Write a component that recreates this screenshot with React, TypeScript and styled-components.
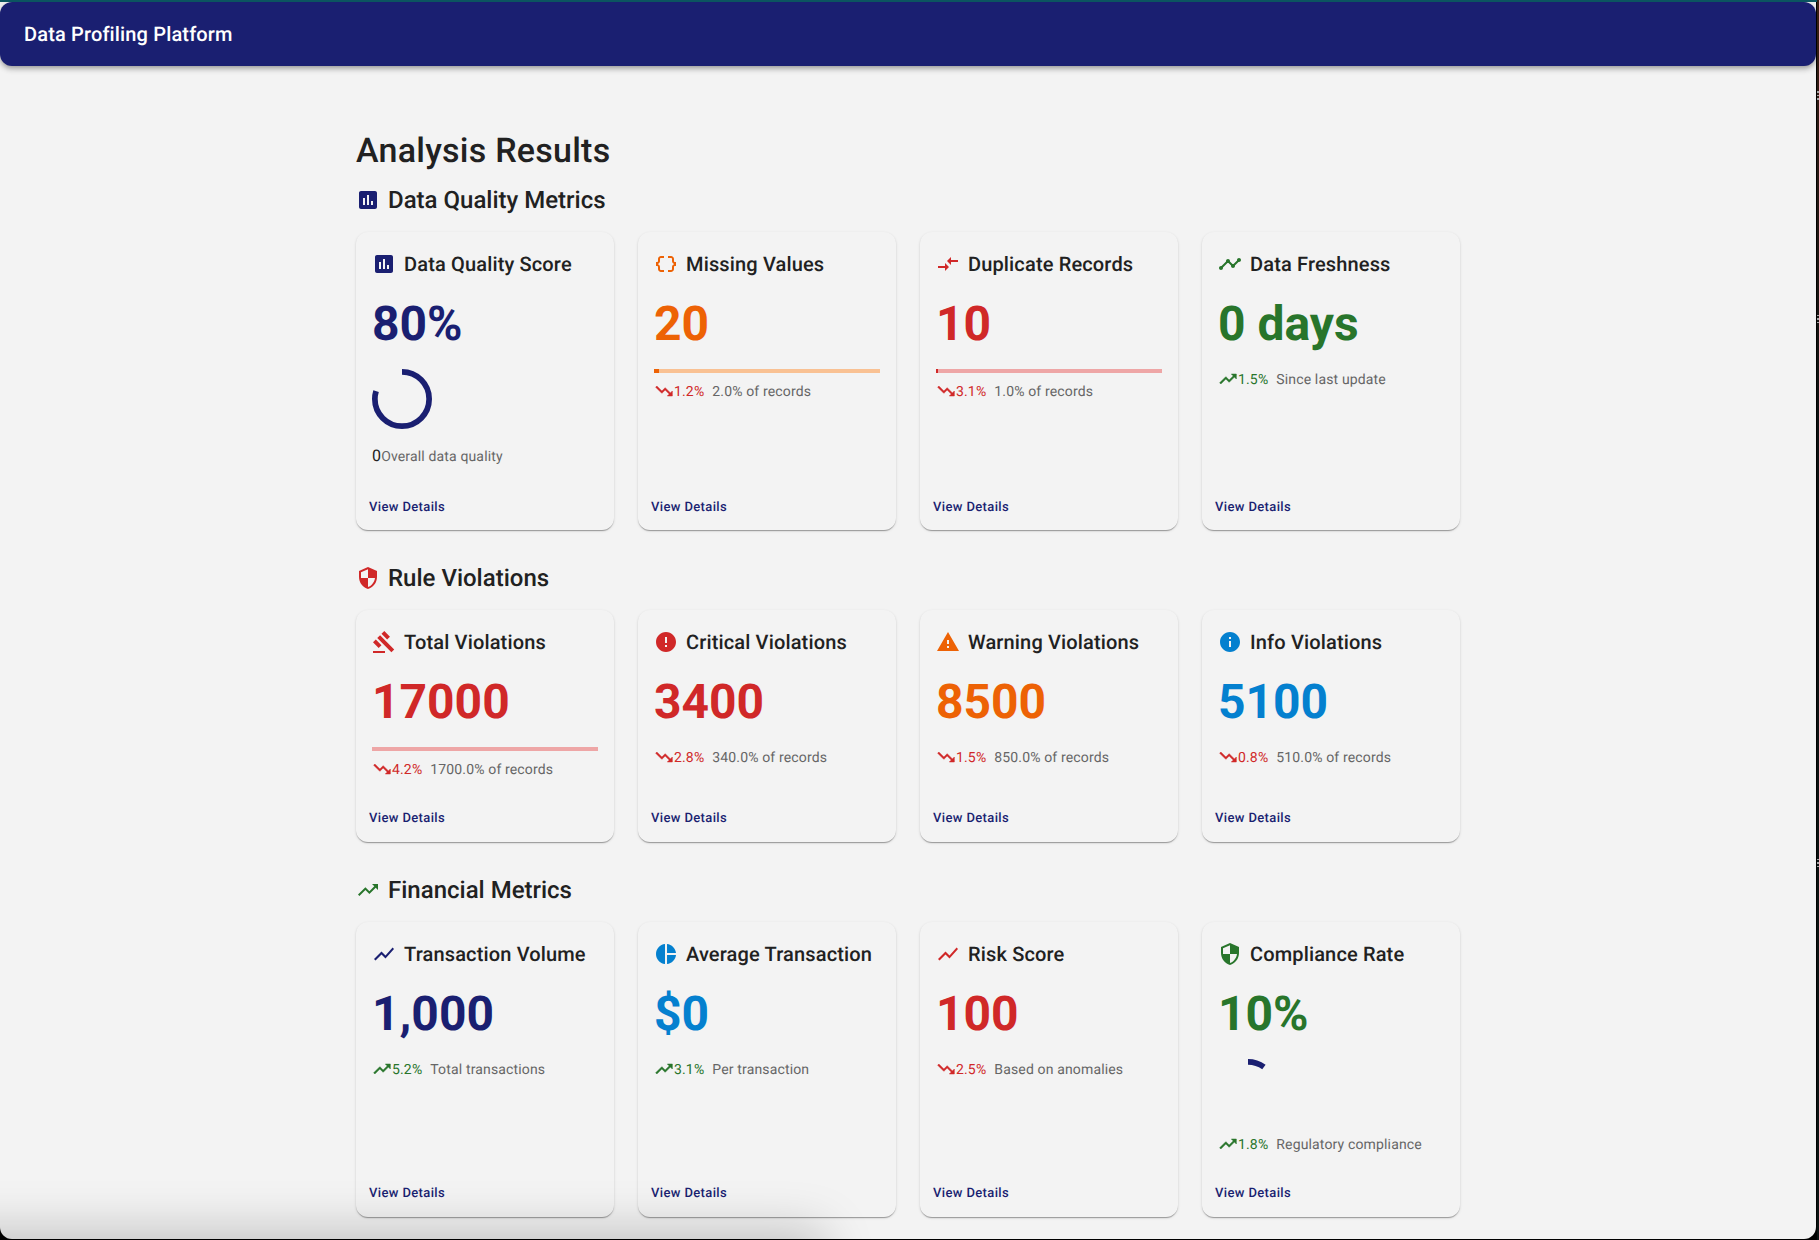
import React from "react";
import styled, { createGlobalStyle } from "styled-components";
import {
  MdAssessment, MdDataObject, MdCompareArrows, MdTimeline, MdSecurity, MdGavel, MdError,
  MdWarning, MdInfo, MdTrendingUp, MdTrendingDown, MdShowChart, MdPieChart,
} from "react-icons/md";
import type { IconType } from "react-icons";

const palette = {
  navy: "#1a1f71",
  orange: "#ed6205",
  red: "#d02828",
  green: "#28752b",
  blue: "#0480cf",
  text: "#212121",
  muted: "#666666",
  page: "#f3f3f3",
};

const GlobalStyle = createGlobalStyle`
  * { box-sizing: border-box; }
  body {
    margin: 0;
    background: #000;
    overflow: hidden;
    font-family: Roboto, "Liberation Sans", sans-serif;
    color: ${palette.text};
    text-rendering: geometricPrecision;
    -webkit-font-smoothing: antialiased;
  }
`;

const ticks = "repeating-linear-gradient(#a5a5a5 0 1.5px, transparent 1.5px 3.5px)";

const Desktop = styled.div`
  height: 1240px;
  padding: 2px 3px 1px 0;
  background:
    linear-gradient(#0b5560, #0b5560) 0 0 / 1817px 2px no-repeat,
    ${ticks} 100% 91px / 2px 9px no-repeat,
    ${ticks} 100% 315px / 2px 9px no-repeat,
    ${ticks} 100% 859px / 2px 9px no-repeat,
    linear-gradient(#3b2013 0, #2d1a12 120px, #0c1010 420px, #0b1312 100%) 100% 0 / 2px 100% no-repeat,
    #000;
`;

const Window = styled.div`
  position: relative;
  height: 1237px;
  overflow: hidden;
  border-radius: 0 0 12px 12px;
  background: ${palette.page};
`;

const AppBar = styled.header`
  height: 64px;
  display: flex;
  align-items: center;
  padding: 0 24px;
  border-radius: 12px;
  background: ${palette.navy};
  color: #fff;
  box-shadow: 0 2px 4px -1px rgba(0, 0, 0, 0.2), 0 4px 5px rgba(0, 0, 0, 0.14), 0 1px 10px rgba(0, 0, 0, 0.12);
`;

const Brand = styled.div`
  font-size: 20px;
  font-weight: 500;
  line-height: 32px;
  letter-spacing: 0.0075em;
`;

const Main = styled.main`
  width: 1152px;
  margin: 0 auto;
  padding: 64px 24px 0;
`;

const PageTitle = styled.h1`
  margin: 0 0 12px;
  font-size: 34px;
  font-weight: 500;
  line-height: 42px;
  letter-spacing: 0.00735em;
`;

const Section = styled.section`
  margin-bottom: 32px;
`;

const SectionTitle = styled.h2`
  display: flex;
  align-items: center;
  gap: 8px;
  margin: 0 0 16px;
  font-size: 24px;
  font-weight: 500;
  line-height: 32px;
`;

const CardActions = styled.div`
  padding: 8px;
`;

const CardGrid = styled.div<{ $lowActions?: boolean }>`
  display: grid;
  grid-template-columns: repeat(4, 1fr);
  gap: 24px;

  ${CardActions} {
    padding: ${(p) => (p.$lowActions ? "9px 8px 7px" : "8px")};
  }
`;

const Card = styled.article`
  display: flex;
  flex-direction: column;
  border-radius: 12px;
  background: ${palette.page};
  box-shadow: 0 2px 1px -1px rgba(0, 0, 0, 0.2), 0 1px 1px rgba(0, 0, 0, 0.14), 0 1px 3px rgba(0, 0, 0, 0.12);
`;

const CardContent = styled.div`
  flex: 1;
  padding: 16px;
`;

const CardTitle = styled.h3`
  display: flex;
  align-items: center;
  gap: 8px;
  margin: 0 0 16px;
  font-size: 20px;
  font-weight: 500;
  line-height: 32px;
  letter-spacing: 0.0075em;
  white-space: nowrap;
`;

const Value = styled.div<{ $color: string }>`
  margin-bottom: 17px;
  color: ${(p) => p.$color};
  font-size: 48px;
  font-weight: 700;
  line-height: 56px;
`;

const Track = styled.div<{ $color: string }>`
  height: 4px;
  margin-bottom: 8px;
  background: ${(p) => p.$color};
`;

const Fill = styled.div<{ $color: string }>`
  height: 4px;
  background: ${(p) => p.$color};
`;

const Gauge = styled.svg`
  display: block;
  width: 60px;
  height: 60px;
  margin-bottom: 15px;
`;

const TrendRow = styled.div<{ $tight: boolean }>`
  display: flex;
  align-items: center;
  padding-top: 1px;
  margin-bottom: ${(p) => (p.$tight ? "-1px" : "0")};
  font-size: 14px;
  line-height: 20px;
  letter-spacing: 0.01071em;
`;

const Zero = styled.span`
  margin-bottom: 2px;
  font-size: 16px;
  line-height: 22px;
  letter-spacing: 0.00938em;
`;

const Change = styled.span<{ $color: string }>`
  display: flex;
  align-items: center;
  height: 20px;
  margin-right: 8px;
  color: ${(p) => p.$color};

  svg {
    flex: none;
    margin-bottom: 2px;
    stroke-width: 0.6;
  }

  path[fill="none"] {
    stroke: none;
  }
`;

const Note = styled.span`
  color: ${palette.muted};
`;

const DetailsButton = styled.button`
  display: block;
  padding: 4px 5px;
  border: 0;
  background: none;
  color: ${palette.navy};
  font: 500 13px/22px Roboto, "Liberation Sans", sans-serif;
  letter-spacing: 0.02857em;
  text-rendering: inherit;
`;

const DockShade = styled.div`
  position: absolute;
  left: -60px;
  bottom: -56px;
  width: 870px;
  height: 50px;
  box-shadow: 0 0 50px 14px rgba(0, 0, 0, 0.21);
  pointer-events: none;
`;

type Metric = {
  title: string;
  icon: IconType;
  color: string;
  value: string;
  bar?: { percent: number; track: string };
  gauge?: number;
  trend?: { up: boolean; text: string };
  note: string;
};

type Group = { title: string; icon: IconType; color: string; lowActions?: boolean; metrics: Metric[] };

const { navy, orange, red, green, blue } = palette;
const pinkTrack = "#eea6a6";

const groups: Group[] = [
  {
    title: "Data Quality Metrics", icon: MdAssessment, color: navy, lowActions: true,
    metrics: [
      { title: "Data Quality Score", icon: MdAssessment, color: navy, value: "80%", gauge: 80, note: "Overall data quality" },
      { title: "Missing Values", icon: MdDataObject, color: orange, value: "20", bar: { percent: 2, track: "#f9c193" }, trend: { up: false, text: "1.2%" }, note: "2.0% of records" },
      { title: "Duplicate Records", icon: MdCompareArrows, color: red, value: "10", bar: { percent: 1, track: pinkTrack }, trend: { up: false, text: "3.1%" }, note: "1.0% of records" },
      { title: "Data Freshness", icon: MdTimeline, color: green, value: "0 days", trend: { up: true, text: "1.5%" }, note: "Since last update" },
    ],
  },
  {
    title: "Rule Violations", icon: MdSecurity, color: red,
    metrics: [
      { title: "Total Violations", icon: MdGavel, color: red, value: "17000", bar: { percent: 0, track: pinkTrack }, trend: { up: false, text: "4.2%" }, note: "1700.0% of records" },
      { title: "Critical Violations", icon: MdError, color: red, value: "3400", trend: { up: false, text: "2.8%" }, note: "340.0% of records" },
      { title: "Warning Violations", icon: MdWarning, color: orange, value: "8500", trend: { up: false, text: "1.5%" }, note: "850.0% of records" },
      { title: "Info Violations", icon: MdInfo, color: blue, value: "5100", trend: { up: false, text: "0.8%" }, note: "510.0% of records" },
    ],
  },
  {
    title: "Financial Metrics", icon: MdTrendingUp, color: green,
    metrics: [
      { title: "Transaction Volume", icon: MdShowChart, color: navy, value: "1,000", trend: { up: true, text: "5.2%" }, note: "Total transactions" },
      { title: "Average Transaction", icon: MdPieChart, color: blue, value: "$0", trend: { up: true, text: "3.1%" }, note: "Per transaction" },
      { title: "Risk Score", icon: MdShowChart, color: red, value: "100", trend: { up: false, text: "2.5%" }, note: "Based on anomalies" },
      { title: "Compliance Rate", icon: MdSecurity, color: green, value: "10%", gauge: 10, trend: { up: true, text: "1.8%" }, note: "Regulatory compliance" },
    ],
  },
];

function MetricCard({ title, icon: Icon, color, value, bar, gauge, trend, note }: Metric) {
  const TrendIcon = trend?.up ? MdTrendingUp : MdTrendingDown;
  return (
    <Card>
      <CardContent>
        <CardTitle><Icon size={24} color={color} />{title}</CardTitle>
        <Value $color={color}>{value}</Value>
        {bar && (
          <Track $color={bar.track}><Fill $color={color} style={{ width: `${bar.percent}%` }} /></Track>
        )}
        {gauge !== undefined && (
          <Gauge viewBox="22 22 44 44">
            <circle cx="44" cy="44" r="19.9" fill="none" stroke={navy} strokeWidth="4.2"
              pathLength={100} strokeDasharray={`${gauge} 100`} transform="rotate(-90 44 44)" />
          </Gauge>
        )}
        <TrendRow $tight={!trend}>
          {trend ? (
            <Change $color={trend.up ? green : red}><TrendIcon size={20} />{trend.text}</Change>
          ) : (
            <Zero>0</Zero>
          )}
          <Note>{note}</Note>
        </TrendRow>
      </CardContent>
      <CardActions><DetailsButton>View Details</DetailsButton></CardActions>
    </Card>
  );
}

export default function App() {
  return (
    <Desktop>
      <GlobalStyle />
      <Window>
        <AppBar><Brand>Data Profiling Platform</Brand></AppBar>
        <Main>
          <PageTitle>Analysis Results</PageTitle>
          {groups.map(({ title, icon: Icon, color, lowActions, metrics }) => (
            <Section key={title}>
              <SectionTitle><Icon size={24} color={color} />{title}</SectionTitle>
              <CardGrid $lowActions={lowActions}>
                {metrics.map((m) => <MetricCard key={m.title} {...m} />)}
              </CardGrid>
            </Section>
          ))}
        </Main>
        <DockShade />
      </Window>
    </Desktop>
  );
}
